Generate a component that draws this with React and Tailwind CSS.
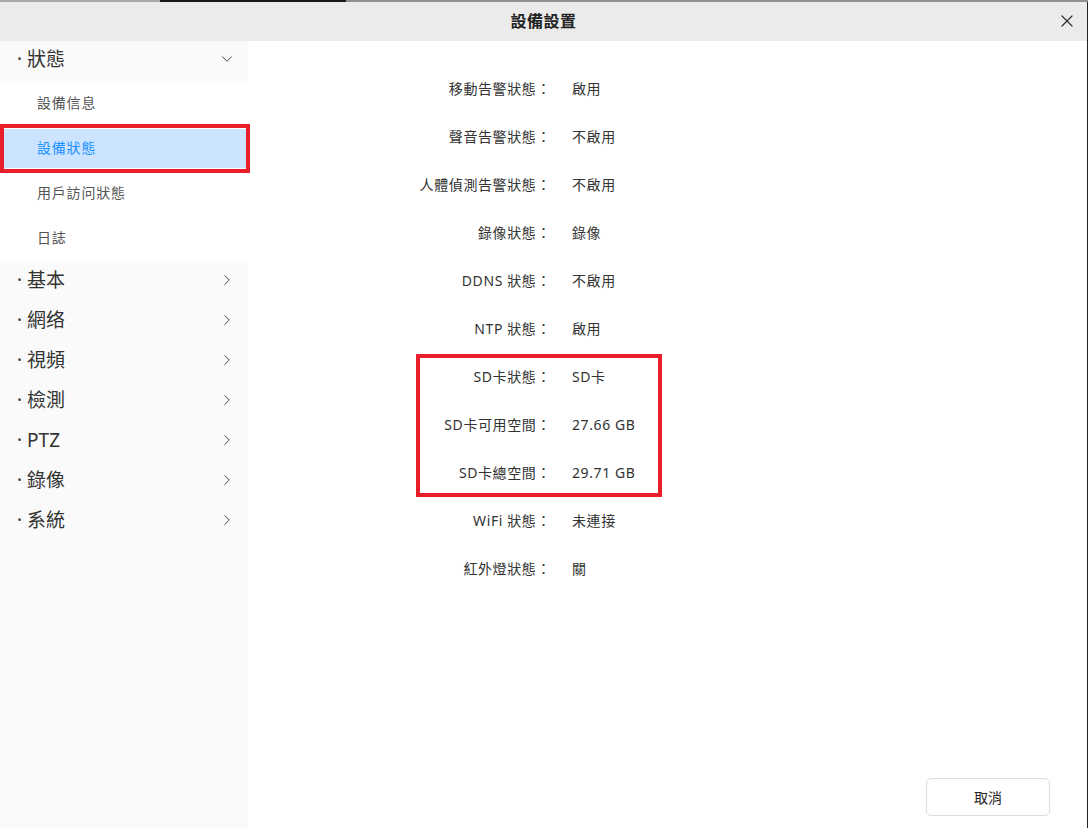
import { ChevronDown, ChevronRight, X } from 'lucide-react'

const FONT = { fontFamily: '"Noto Sans", "Noto Sans CJK TC", sans-serif' }

const SUB_ITEMS = ['設備信息', '設備狀態', '用戶訪问狀態', '日誌']
const MENUS = ['基本', '網络', '視頻', '檢測', 'PTZ', '錄像', '系統']

const ROWS = [
  ['移動告警狀態：', '啟用'],
  ['聲音告警狀態：', '不啟用'],
  ['人體偵測告警狀態：', '不啟用'],
  ['錄像狀態：', '錄像'],
  ['DDNS 狀態：', '不啟用'],
  ['NTP 狀態：', '啟用'],
  ['SD卡狀態：', 'SD卡'],
  ['SD卡可用空間：', '27.66 GB'],
  ['SD卡總空間：', '29.71 GB'],
  ['WiFi 狀態：', '未連接'],
  ['紅外燈狀態：', '關'],
]

export default function App() {
  return (
    <div className="w-[1088px] h-[828px] flex flex-col overflow-hidden bg-white" style={FONT}>
      {/* video behind the dialog, peeking out at the top */}
      <div className="h-[2px] flex shrink-0">
        <div className="w-[160px] bg-[#a8a8a8]" />
        <div className="w-[186px] bg-[#1a1a1a]" />
        <div className="flex-1 bg-[#8e918c]" />
      </div>
      <div className="flex-1 flex min-h-0">
        <div className="w-[1087px] flex flex-col">
          <div className="h-[39px] shrink-0 bg-[#ebebeb] flex items-center justify-center relative">
            <span className="text-[16px] font-bold tracking-[0.5px] text-[#222] -mt-[2px]">設備設置</span>
            <button className="absolute right-[10px] top-[9px] text-[#333]" aria-label="關閉">
              <X size={20} strokeWidth={1.5} />
            </button>
          </div>
          <div className="flex-1 flex min-h-0">
            <aside className="w-[248px] shrink-0 bg-[#fafafa] flex flex-col">
              <div className="h-[40px] flex items-center pl-[17px] pr-[12px] text-[19px] text-[#333] pb-[4px]">
                <span className="mr-[5px]">·</span>
                <span className="flex-1">狀態</span>
                <ChevronDown size={18} strokeWidth={1.3} className="text-[#444]" />
              </div>
              <div className="bg-white flex flex-col">
                {SUB_ITEMS.map((s, i) => (
                  <div key={s} className={`h-[45px] flex items-center pl-[37px] text-[14px] tracking-[0.8px] relative pb-[3px] ${i === 1 ? 'text-[#1890ff]' : 'text-[#555]'}`}>
                    {i === 1 && <div className="absolute left-0 right-0 top-[3px] bottom-[3px] bg-[#cce4ff]" />}
                    {i === 1 && <div className="absolute left-0 right-[-2px] top-[-2px] bottom-[-2px] border-[4px] border-[#e81f2b]" />}
                    <span className="relative">{s}</span>
                  </div>
                ))}
              </div>
              {MENUS.map(m => (
                <div key={m} className="h-[40px] flex items-center pl-[17px] pr-[12px] text-[19px] text-[#333] pb-[2px]">
                  <span className="mr-[5px]">·</span>
                  <span className="flex-1">{m}</span>
                  <ChevronRight size={18} strokeWidth={1.3} className="text-[#444]" />
                </div>
              ))}
            </aside>
            <main className="flex-1 flex flex-col relative">
              <div className="pt-[24px] relative">
                {ROWS.map(([k, v]) => (
                  <div key={k} className="h-[48px] flex items-center text-[14px] tracking-[0.6px] text-[#333] pb-[2px]">
                    <div className="w-[303px] text-right">{k}</div>
                    <div className="pl-[21px]">{v}</div>
                  </div>
                ))}
                <div className="absolute left-[168px] top-[313px] w-[246px] h-[143px] border-[4px] border-[#e81f2b]" />
              </div>
              <div className="mt-auto flex justify-end pr-[37px] pb-[12px]">
                <button className="w-[124px] h-[38px] rounded-[5px] border border-[#dcdcdc] bg-white text-[14px] text-[#222]">取消</button>
              </div>
            </main>
          </div>
        </div>
        <div className="w-[1px] bg-[#222]" />
      </div>
    </div>
  )
}
